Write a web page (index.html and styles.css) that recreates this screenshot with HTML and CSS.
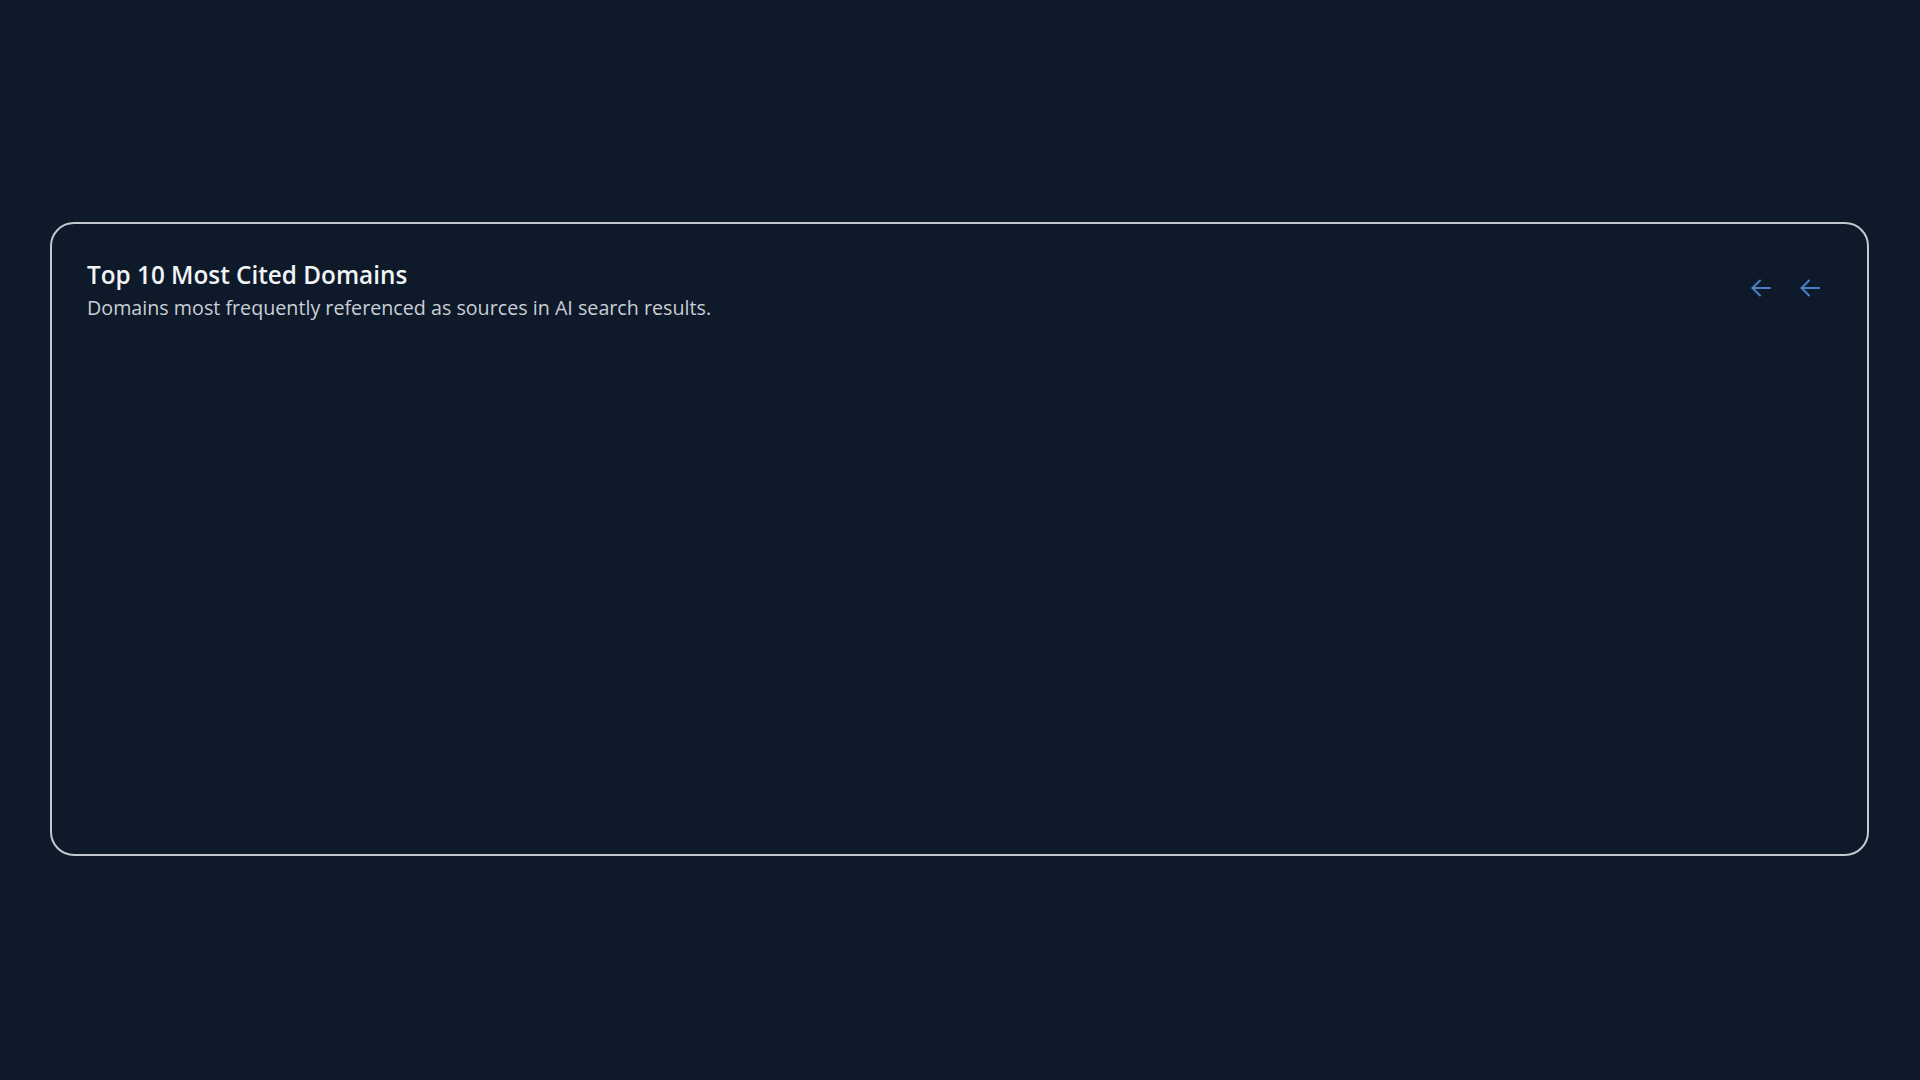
FILE: index.html
```html
<!DOCTYPE html>
<html lang="en">
<head>
<meta charset="utf-8">
<title>Top 10 Most Cited Domains</title>
<link rel="stylesheet" href="styles.css">
</head>
<body>
<main class="page">
  <section class="card">
    <header class="card-header">
      <div class="heading">
        <h2 class="title">Top 10 Most Cited Domains</h2>
        <p class="subtitle">Domains most frequently referenced as sources in AI search results.</p>
      </div>
      <div class="nav">
        <button class="nav-btn" aria-label="Previous">
          <svg width="20" height="18" viewBox="0 0 20 18" fill="none" stroke="currentColor" stroke-width="2" stroke-linecap="round" stroke-linejoin="round"><path d="M19 9H1.5"/><path d="M9 1.5 1.5 9 9 16.5"/></svg>
        </button>
        <button class="nav-btn" aria-label="Next">
          <svg width="20" height="18" viewBox="0 0 20 18" fill="none" stroke="currentColor" stroke-width="2" stroke-linecap="round" stroke-linejoin="round"><path d="M19 9H1.5"/><path d="M9 1.5 1.5 9 9 16.5"/></svg>
        </button>
      </div>
    </header>
    <div class="card-body"></div>
  </section>
</main>
</body>
</html>
```

FILE: styles.css
```css
html, body {
  margin: 0;
  padding: 0;
  background: #0e1a2a;
}

body {
  font-family: "Open Sans", "Noto Sans", "Liberation Sans", sans-serif;
  color: #eef1f5;
}

.page {
  padding: 222px 51px 0 50px;
}

.card {
  box-sizing: border-box;
  height: 634px;
  border: 2px solid #c3c8cf;
  border-radius: 24px;
  background: #0e1a2a;
  padding: 35px 36px 34px 35px;
  display: flex;
  flex-direction: column;
}

.card-header {
  display: flex;
  align-items: center;
  justify-content: space-between;
}

.title {
  margin: 0 0 3px 0;
  font-size: 24.3px;
  line-height: 32px;
  font-weight: 600;
  color: #f1f3f6;
}

.subtitle {
  margin: 0;
  font-size: 19.7px;
  line-height: 27px;
  font-weight: 400;
  color: #c9ced6;
}

.nav {
  display: flex;
  gap: 29px;
  margin-right: 11px;
  margin-top: -5px;
}

.nav-btn {
  display: flex;
  align-items: center;
  justify-content: center;
  width: 20px;
  height: 18px;
  padding: 0;
  border: none;
  background: transparent;
  color: #4a80c4;
  cursor: pointer;
}

.card-body {
  flex: 1;
}
```
